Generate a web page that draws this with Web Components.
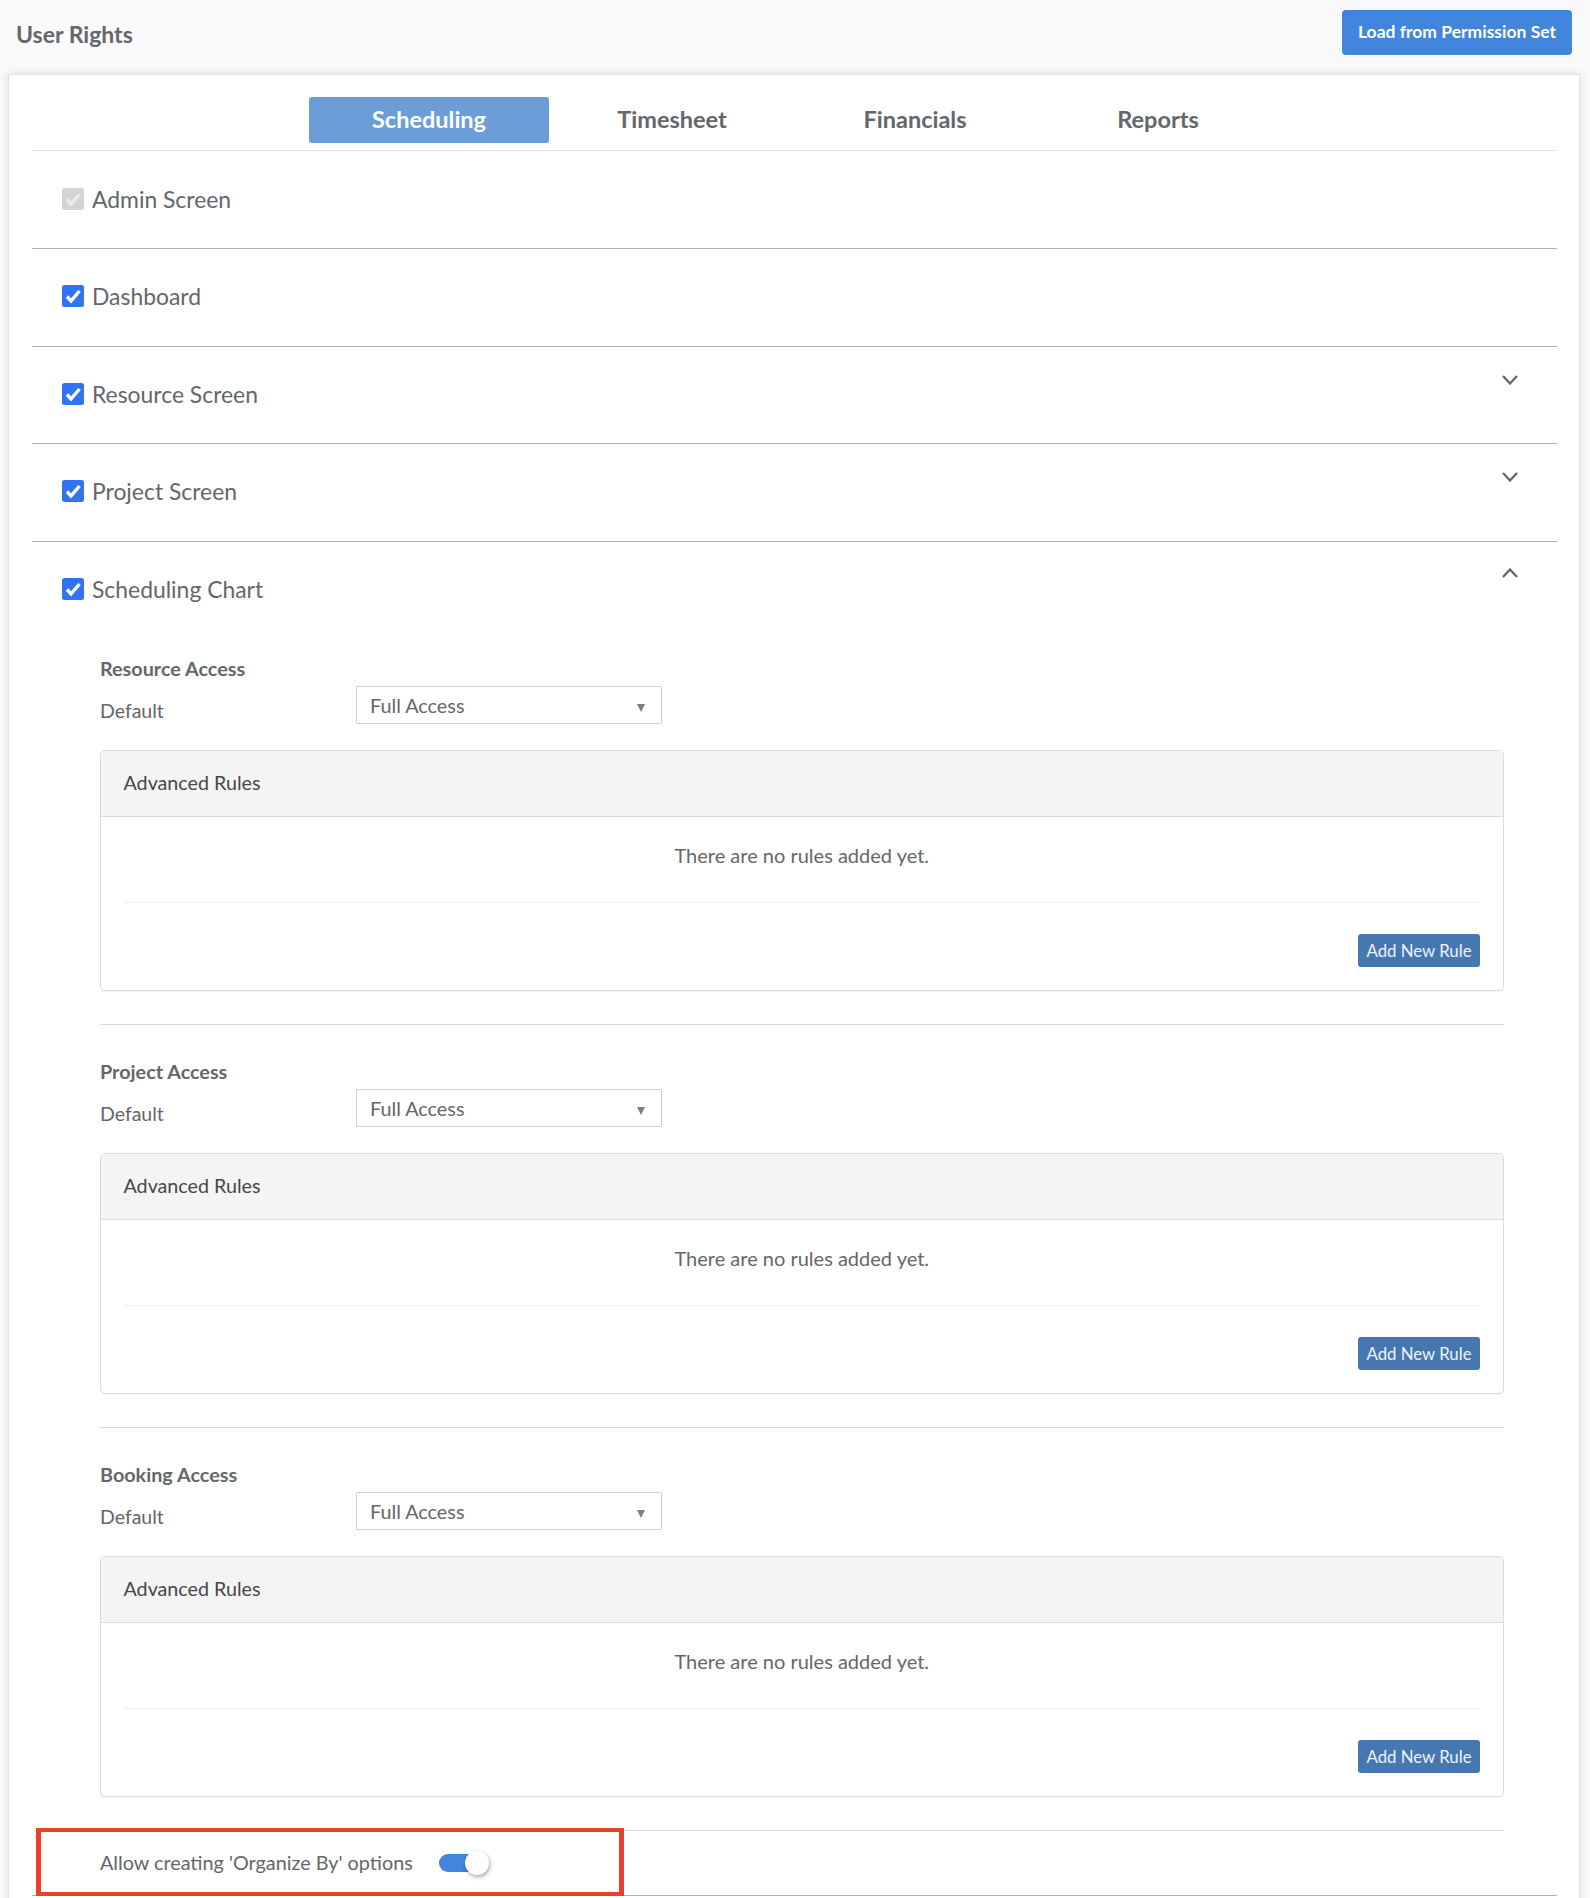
<!DOCTYPE html>
<html lang="en"><head><meta charset="utf-8"><title>User Rights</title>
<style>
html,body{margin:0;padding:0;background:#fafafa}
body{font-family:"Lato","Noto Sans",sans-serif;color:#63676b}
</style></head>
<body>
<rights-page>
  <page-header slot="header" heading="User Rights">Load from Permission Set</page-header>
  <rights-card>
    <tab-bar>
      <tab-item active>Scheduling</tab-item>
      <tab-item>Timesheet</tab-item>
      <tab-item>Financials</tab-item>
      <tab-item>Reports</tab-item>
    </tab-bar>
    <perm-row disabled>Admin Screen</perm-row>
    <perm-row>Dashboard</perm-row>
    <perm-row chevron="down">Resource Screen</perm-row>
    <perm-row chevron="down">Project Screen</perm-row>
    <perm-row chevron="up">Scheduling Chart
      <access-section slot="detail" heading="Resource Access"></access-section>
      <access-section slot="detail" heading="Project Access"></access-section>
      <access-section slot="detail" heading="Booking Access" class="last"></access-section>
      <toggle-row slot="detail">Allow creating 'Organize By' options</toggle-row>
    </perm-row>
  </rights-card>
</rights-page>
<script>
function comp(name, html, setup){
  customElements.define(name, class extends HTMLElement{
    constructor(){super();this.attachShadow({mode:'open'}).innerHTML=html;}
    connectedCallback(){ if(setup) setup(this,this.shadowRoot); }
  });
}
comp('rights-page',`<style>
:host{display:flex;flex-direction:column;height:1898px;overflow:hidden;background:#fafafa}
</style><slot name="header"></slot><slot></slot>`);

comp('page-header',`<style>
:host{display:flex;align-items:center;justify-content:space-between;height:74px;flex:none;padding:0 18px 0 16px;box-sizing:border-box}
h1{margin:-7px 0 0;font:700 23px/28px "Lato","Noto Sans",sans-serif;color:#63676b}
button{width:230px;height:45px;margin:-10px 0 0;border:0;border-radius:4px;background:#4285dc;color:#fff;font:700 17.5px/20px "Lato","Noto Sans",sans-serif;padding:0}
</style><h1></h1><button><slot></slot></button>`,(el,s)=>{s.querySelector('h1').textContent=el.getAttribute('heading')});

comp('rights-card',`<style>
:host{display:block;flex:none;height:1840px;margin:0 10.5px 0 8px;padding:0 22px 0 23px;box-sizing:border-box;background:#fff;border:1px solid #e2e2e2;box-shadow:0 0 9px rgba(0,0,0,.13)}
</style><slot></slot>`);

comp('tab-bar',`<style>
:host{display:flex;gap:3px;height:76px;margin-bottom:.5px;padding:22px 0 0 277px;box-sizing:border-box;border-bottom:1px solid #e2e2e2}
</style><slot></slot>`);

comp('tab-item',`<style>
:host{display:flex;align-items:center;justify-content:center;width:240px;height:46px;border-radius:3px;font:700 23.5px/28px "Lato","Noto Sans",sans-serif;color:#63676b}
:host([active]){background:#6c9dd6;color:#fff}
span{position:relative;top:-1px}
</style><span><slot></slot></span>`);

comp('check-box',`<style>
:host{display:block;width:22px;height:22px;flex:none}
svg{display:block}
.b{fill:#3273f6}.c{stroke:#fff}
:host([disabled]) .b{fill:#d4d4d4}
:host([disabled]) .c{stroke:#ececec}
</style><svg width="22" height="22" viewBox="0 0 22 22"><rect class="b" x="0" y="0" width="22" height="22" rx="2.5"/><path class="c" d="M5 11.5 L9 16 L17.5 6" fill="none" stroke-width="3.4"/></svg>`);

comp('perm-row',`<style>
:host{display:block;min-height:97.5px;box-sizing:border-box;border-bottom:1px solid #b0b0b0;position:relative}
.head{display:flex;align-items:flex-start;justify-content:space-between;height:96.5px;padding:0 39px 0 30px;box-sizing:border-box}
.l{display:flex;align-items:center;height:94.5px;gap:8px;font:400 22.9px/28px "Lato","Noto Sans",sans-serif;color:#63676b}
.chev{display:block;margin-top:28px}
:host([chevron="up"]) .chev{margin-top:26.5px}
.detail{padding:0 53px 0 68px}
:host(:not([chevron="up"])) .detail{display:none}
</style><div class="head"><div class="l"><check-box></check-box><span><slot></slot></span></div>
<svg class="chev" width="16" height="10" viewBox="0 0 16 10"><path d="M1 1 L8 8.5 L15 1" fill="none" stroke="#5f6368" stroke-width="2.2"/></svg></div>
<div class="detail"><slot name="detail"></slot></div>`,(el,s)=>{
  if(el.hasAttribute('disabled')) s.querySelector('check-box').setAttribute('disabled','');
  const c=el.getAttribute('chevron'),sv=s.querySelector('.chev');
  if(!c) sv.style.visibility='hidden';
  if(c==='up') sv.querySelector('path').setAttribute('d','M1 9 L8 1.5 L15 9');
});

comp('select-box',`<style>
:host{display:flex;align-items:center;justify-content:space-between;width:306px;height:38px;box-sizing:border-box;border:1px solid #cfcfcf;background:#fff;padding:0 16.5px 0 13px;font:400 19.8px/24px "Lato","Noto Sans",sans-serif;color:#63676b;border-radius:1px}
svg{display:block;margin-top:5px}
</style><span><slot></slot></span><svg width="8" height="8" viewBox="0 0 8 8"><path d="M0 0H8L4 8Z" fill="#7f7f7f"/></svg>`);

comp('rule-button',`<style>
:host{display:flex;align-items:center;justify-content:center;width:122px;height:33px;background:#4677b0;border-radius:3px;color:#eef3fa;font:400 16.8px/20px "Lato","Noto Sans",sans-serif}
</style><slot></slot>`);

comp('rules-panel',`<style>
:host{display:block;border:1px solid #dcdcdc;border-radius:5px;background:#fff;overflow:hidden;box-shadow:0 1px 1px rgba(0,0,0,.04)}
.h{height:64.5px;padding:0 22.5px;background:#f4f4f4;border-bottom:1px solid #dcdcdc;color:#45484b;font:400 19.7px/63px "Lato","Noto Sans",sans-serif}
.b{padding:0 22.5px}
.m{box-sizing:border-box;height:86.5px;padding-bottom:9px;display:flex;align-items:center;justify-content:center;border-bottom:1px solid #eee;font:400 20px/24px "Lato","Noto Sans",sans-serif;color:#63676b}
.f{display:flex;justify-content:flex-end;padding:31px 0 23px}
</style><div class="h">Advanced Rules</div><div class="b"><div class="m">There are no rules added yet.</div><div class="f"><rule-button>Add New Rule</rule-button></div></div>`);

comp('access-section',`<style>
:host{display:block;padding-top:18px;margin-bottom:16px}
:host(.last){margin-bottom:0}
h2{margin:0;font:700 19.8px/24px "Lato","Noto Sans",sans-serif;color:#63676b}
.d{display:flex;align-items:flex-start;margin-top:6px}
.d span{width:256px;margin-top:13px;font:400 19.5px/24px "Lato","Noto Sans",sans-serif;color:#63676b}
rules-panel{margin-top:26px}
.e{margin-top:33px;border-bottom:1px solid #dcdcdc}
</style><h2></h2><div class="d"><span>Default</span><select-box>Full Access</select-box></div><rules-panel></rules-panel><div class="e"></div>`,(el,s)=>{s.querySelector('h2').textContent=el.getAttribute('heading')});

comp('toggle-switch',`<style>
:host{display:block;position:relative;width:50px;height:24px;flex:none}
.t{position:absolute;left:0;top:3px;width:45px;height:18px;border-radius:9px;background:#4285dc}
.k{position:absolute;left:26px;top:0;width:24px;height:24px;border-radius:50%;background:#fff;box-shadow:1px 2px 4px rgba(0,0,0,.35)}
</style><div class="t"></div><div class="k"></div>`);

comp('annotation-box',`<style>
:host{position:absolute;left:-64px;top:-3.5px;width:588px;height:68.5px;box-sizing:border-box;border:solid #e8402a;border-width:4px 5px;pointer-events:none}
</style>`);

comp('toggle-row',`<style>
:host{display:flex;align-items:center;gap:26px;height:64px;position:relative;font:400 19.8px/24px "Lato","Noto Sans",sans-serif;color:#63676b}
span{margin-top:-2px}
</style><span><slot></slot></span><toggle-switch></toggle-switch><annotation-box></annotation-box>`);
</script>
</body></html>
